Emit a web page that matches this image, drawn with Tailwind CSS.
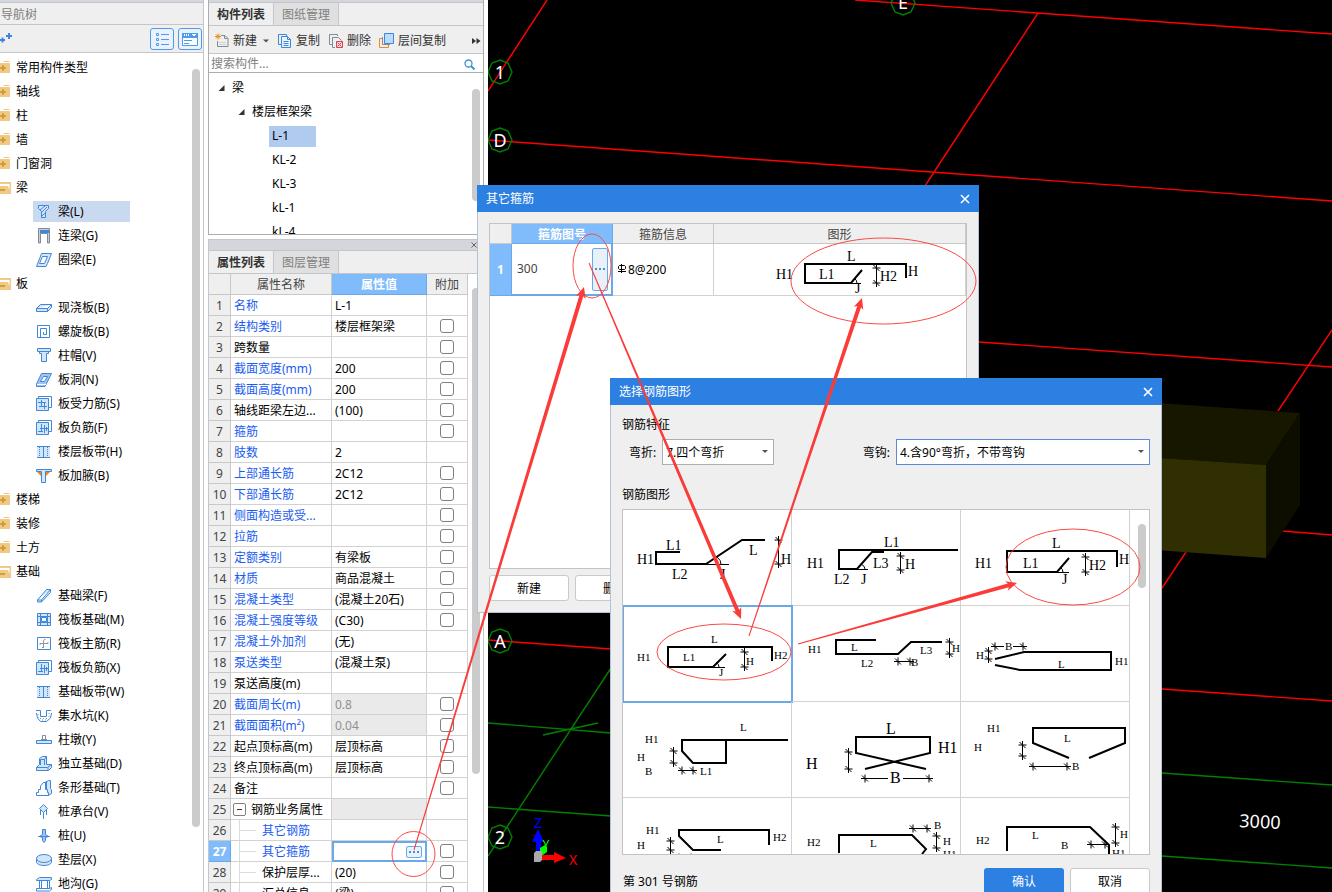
<!DOCTYPE html>
<html lang="zh-CN">
<head>
    <meta charset="UTF-8">
    <meta name="viewport" content="width=device-width, initial-scale=1.0">
    <title>其它箍筋</title>
    <script src="https://cdn.jsdelivr.net/npm/@tailwindcss/browser@4"></script>
</head>
<body class="bg-white text-black text-xs font-['Noto_Sans','Noto_Sans_CJK_SC',sans-serif]">
<div class="relative flex h-screen w-full overflow-hidden">

    <!-- Navigation tree -->
    <aside class="relative flex w-[204px] shrink-0 flex-col border-r border-[#c3c6cc]">
        <div class="h-[3px] border-b border-[#c3c6cc] bg-[#d5d6db]"></div>
        <h2 class="h-[22px] border-b border-[#c3c6cc] bg-[#efefef] pl-px leading-[23px] text-[#808080]">导航树</h2>
        <div class="flex h-7 items-center gap-1 border-b border-[#c3c6cc] bg-[#efefef] pt-[2px] pr-px">
            <svg class="mr-auto h-4 w-4" viewBox="0 0 16 16" stroke="#3f87d8" stroke-width="2"><path d="M0 9h5M2.500 6.500v5M6 5h6M9 2v6"/></svg>
            <button aria-label="列表" class="flex h-[22px] w-6 items-center justify-center rounded-[3px] border border-[#4d9bea] bg-[#eaf3fd]">
                <svg class="h-4 w-4" viewBox="0 0 16 16" fill="none" stroke="#4d9bea"><path d="M2.500 2.500h2v2h-2zM2.500 7.500h2v2h-2zM2.500 12.500h2v2h-2zM7 3.500h8M7 8.500h8M7 13.500h8"/></svg>
            </button>
            <button aria-label="面板" class="flex h-[22px] w-6 items-center justify-center rounded-[3px] border border-[#4d9bea] bg-[#eaf3fd]">
                <svg class="h-4 w-4" viewBox="0 0 16 16" fill="none" stroke="#4d9bea"><path fill="#fff" d="M.5 2.500h15v12H.5z"/><path fill="#4d9bea" d="M.5 2.500h15v4H.5z"/><path stroke="#fff" d="M2.500 3v2M4.500 3v2M6.500 3v2M10 3.500h4M11 4.500h2"/><path d="M2 9.500h8M2 12.500h5"/></svg>
            </button>
        </div>
        <ul id="navTree" class="overflow-hidden pt-[3px]"></ul>
        <div class="absolute top-[69px] right-[3px] h-[758px] w-2 rounded-full bg-[#cbcbcb]"></div>
    </aside>

    <!-- Component list + properties -->
    <section class="mx-1 flex w-[276px] shrink-0 flex-col">
        <div class="relative flex h-[235px] shrink-0 flex-col border border-t-0 border-[#adadad]">
            <div class="h-[3px] shrink-0 border-b border-[#c3c6cc] bg-[#d5d6db]"></div>
            <div class="flex h-[23px] shrink-0 border-b border-[#c3c6cc] bg-[#efefef]">
                <button class="w-[65px] border-r border-[#c3c6cc] pt-[2px] font-bold text-[#333]">构件列表</button>
                <button class="w-[65px] border-r border-[#c3c6cc] bg-[#e0e0e0] pt-[2px] text-[#808080]">图纸管理</button>
            </div>
            <div class="flex h-7 shrink-0 items-center gap-1 border-b border-[#c3c6cc] bg-[#efefef] pt-[2px] pr-[2px] pl-[6px] text-[#333]">
                <button class="flex items-center gap-1">
                    <svg class="h-4 w-[14px]" viewBox="0 0 14 16" fill="none"><path stroke="#808b95" d="M6 2.500h4l3 3v8H2.500V8M9.500 2.500v3h3"/><path stroke="#d0d4d8" d="M4 9.500h7M4 11.500h7"/><path stroke="#f08a1d" d="M0 3.500h6M3 .5v6M1 1.500l4 4M5 1.500l-4 4"/></svg>
                    新建
                </button>
                <svg class="mx-px h-2 w-2" viewBox="0 0 8 8"><path fill="#555" d="M1 2.500h6L4 5.500z"/></svg>
                <button class="ml-[3px] flex items-center gap-1">
                    <svg class="h-4 w-[14px]" viewBox="0 0 14 16" fill="none" stroke="#3f87d8"><path d="M8.500 3V1.500h-8v10H3"/><path fill="#eaf3fd" d="M3.500 3.500h6l3 3v8h-9zM9.500 3.500v3h3M5.500 8.500h5M5.500 10.500h5M5.500 12.500h5"/></svg>
                    复制
                </button>
                <button class="ml-1 flex items-center gap-1">
                    <svg class="h-4 w-[15px]" viewBox="0 0 15 16" fill="none"><path stroke="#7f8b97" d="M9.500 3V1.500h-8v10H4M7 14.500H4.500v-10h6l3 3"/><path fill="#fbdede" stroke="#d9434e" d="M8.500 8.500h6v6h-6zM9.500 9.500l4 4M13.500 9.500l-4 4"/></svg>
                    删除
                </button>
                <button class="ml-1 flex items-center gap-1">
                    <svg class="h-4 w-[15px]" viewBox="0 0 15 16" fill="none"><path stroke="#7f8b97" d="M3.500 4v7.500H11"/><path stroke="#f08a1d" d="M3 5.500H.5v9h9V12"/><path fill="#bcdcff" stroke="#3f87d8" d="M5.500 .5h9v10h-9z"/></svg>
                    层间复制
                </button>
                <svg class="ml-auto h-2 w-[9px]" viewBox="0 0 9 8" fill="#333"><path d="M0 1l4 3-4 3zM4.500 1l4 3-4 3z"/></svg>
            </div>
            <div class="flex h-[19px] shrink-0 items-center border-b border-[#adadad] pt-[2px] pr-2">
                <input aria-label="搜索构件" placeholder="搜索构件..." class="min-w-0 flex-1 pl-[2px] outline-none placeholder:text-[#808080]">
                <svg class="h-[11px] w-[11px]" viewBox="0 0 11 11" fill="none" stroke="#3b93cf"><circle cx="4.500" cy="4.500" r="3.500" stroke-width="1.300"/><path d="M7 7l3.500 3.500" stroke-width="2"/></svg>
            </div>
            <ul class="min-h-0 flex-1 overflow-hidden pt-[3px] leading-6">
                <li class="flex items-center gap-[6px] pl-2"><svg class="h-2 w-[9px]" viewBox="0 0 9 8"><path fill="#333" d="M7.500 1v6h-6z"/></svg>梁</li>
                <li class="flex items-center gap-[6px] pl-7"><svg class="h-2 w-[9px]" viewBox="0 0 9 8"><path fill="#333" d="M7.500 1v6h-6z"/></svg>楼层框架梁</li>
                <li class="flex h-6 items-center pl-[60px]"><span class="h-[21px] w-[47px] bg-[#b0cbed] pl-[3px] leading-5">L-1</span></li>
                <li class="pl-[63px]">KL-2</li>
                <li class="pl-[63px]">KL-3</li>
                <li class="pl-[63px]">kL-1</li>
                <li class="pl-[63px]">kL-4</li>
            </ul>
            <div class="absolute top-[89px] right-[3px] h-28 w-2 rounded-full bg-[#cbcbcb]"></div>
        </div>

        <div class="relative mt-1 flex min-h-0 flex-1 flex-col border-x border-[#c3c6cc]">
            <div class="flex h-3 shrink-0 items-center justify-end border-y border-[#c3c6cc] bg-[#d5d6db] pr-[6px]">
                <svg class="h-[6px] w-[6px]" viewBox="0 0 6 6" stroke="#666"><path d="M.5 .5l5 5M5.500 .5l-5 5"/></svg>
            </div>
            <div class="flex h-[23px] shrink-0 border-b border-[#c3c6cc] bg-[#efefef]">
                <button class="w-[65px] border-r border-[#c3c6cc] pt-[2px] font-bold text-[#333]">属性列表</button>
                <button class="w-[65px] border-r border-[#c3c6cc] bg-[#e0e0e0] pt-[2px] text-[#808080]">图层管理</button>
            </div>
            <div class="min-h-0 flex-1 overflow-hidden">
                <table class="w-[259px] table-fixed border-separate border-spacing-0">
                    <thead>
                        <tr class="h-[21px] bg-[#efefef] text-[#444]">
                            <th class="w-[22px] border-r border-b border-[#c8c8c8] p-0"></th>
                            <th class="w-[101px] border-r border-b border-[#c8c8c8] p-0 pt-[2px] font-normal">属性名称</th>
                            <th class="w-[95px] border-r border-b border-[#6aa9e9] bg-[#80bcfb] p-0 pt-[2px] font-bold text-white">属性值</th>
                            <th class="w-[41px] border-r border-b border-[#c8c8c8] p-0 pt-[2px] font-normal">附加</th>
                        </tr>
                    </thead>
                    <tbody id="props"></tbody>
                </table>
            </div>
            <div class="absolute top-[49px] right-[3px] h-[486px] w-2 rounded-full bg-[#cbcbcb]"></div>
        </div>
    </section>

    <!-- 3D view -->
    <main class="min-w-0 flex-1 bg-black">
        <svg class="h-full w-full" viewBox="488 0 844 892" preserveAspectRatio="xMinYMin slice" fill="none">
            <g stroke="#ff0000" stroke-width="1.400">
                <path d="M547 0L488 91M855 0L1332 34M1038 13L925 186M488 140L1332 201M979 342L1332 367M1332 330L1278 411M1282 531L1332 535M1186 552L1162 588M1162 689L1332 701M488 640L611 649"/>
            </g>
            <path fill="#171700" d="M1100 399L1300 413 1266 465 1100 454z"/>
            <path fill="#2f2f02" d="M1100 454L1266 465V558L1100 546z"/>
            <path fill="#0d0d00" d="M1266 465L1300 413V505L1266 558z"/>
            <g stroke="#008000" stroke-width="1.400">
                <path d="M488 723L611 733M488 807L611 816M488 856L611 668M543 735L598 723M1162 773L1332 785M1162 856L1332 868"/>
                <path id="bubbles"/>
            </g>
            <g fill="#fff" font-size="18" text-anchor="middle">
                <text x="903" y="9">E</text>
                <text x="500" y="79">1</text>
                <text x="500" y="147">D</text>
                <text x="500" y="648">A</text>
                <text x="500" y="844">2</text>
                <text x="1260" y="828" transform="rotate(3 1260 821)">3000</text>
            </g>
            <path fill="#00f" d="M536 840h5v13h-5zM532 842l6-13 6 13z"/>
            <path fill="#0f0" d="M540 848l5-3 2 2v5l-4 3-3 1z"/>
            <path fill="#f00" d="M542 855h13v5h-13zM554 852l12 6-12 5z"/>
            <path fill="#aaa" d="M534 853l2-2h6v9l-2 2h-6z"/>
            <g font-size="14" text-anchor="middle">
                <text x="538" y="828" fill="#00f">Z</text>
                <text x="546" y="849" fill="#0f0" font-size="12">Y</text>
                <text x="573" y="865" fill="#f00">X</text>
            </g>
        </svg>
    </main>

    <!-- Other stirrups window -->
    <div class="absolute top-[185px] left-[477px] flex h-[428px] w-[502px] flex-col border border-t-0 border-[#b5c1d6] bg-[#efefef]">
        <div class="-mx-px flex h-[27px] items-center justify-between bg-[#2c80e2] px-[9px] text-white">
            <span>其它箍筋</span>
            <button aria-label="关闭"><svg class="h-[10px] w-[10px]" viewBox="0 0 10 10" stroke="#fff" stroke-width="1.600"><path d="M1 1l8 8M9 1l-8 8"/></svg></button>
        </div>
        <div class="mx-[11px] mt-[11px] h-[346px] border border-[#c3c3c3] bg-white">
            <table class="w-[476px] table-fixed border-separate border-spacing-0">
                <thead>
                    <tr class="h-5 bg-[#efefef] text-[#444]">
                        <th class="w-[22px] border-r border-b border-[#c8c8c8] p-0"></th>
                        <th class="w-[101px] border-r border-b border-[#6aa9e9] bg-[#80bcfb] p-0 pt-[2px] font-bold text-white">箍筋图号</th>
                        <th class="w-[101px] border-r border-b border-[#c8c8c8] p-0 pt-[2px] font-normal">箍筋信息</th>
                        <th class="w-[252px] border-r border-b border-[#c8c8c8] p-0 pt-[2px] font-normal">图形</th>
                    </tr>
                </thead>
                <tbody>
                    <tr class="h-[52px]">
                        <th class="border-r border-b border-[#6aa9e9] bg-[#80bcfb] p-0 font-bold text-white">1</th>
                        <td class="border-r-2 border-b-2 border-[#6aa9e9] p-0">
                            <div class="flex items-center justify-between pr-[3px] pl-[5px] text-[#444]">
                                300
                                <button aria-label="选择图号" class="flex h-[43px] w-4 items-center justify-center gap-[2px] rounded-[2px] border border-[#6aa9e9] bg-[#eaf0f7]">
                                    <i class="h-[2px] w-[2px] bg-[#4a8fd6]"></i><i class="h-[2px] w-[2px] bg-[#4a8fd6]"></i><i class="h-[2px] w-[2px] bg-[#4a8fd6]"></i>
                                </button>
                            </div>
                        </td>
                        <td class="border-r border-b border-[#d2d2d2] p-0">
                            <div class="flex items-center gap-px pl-1">
                                <svg class="h-[11px] w-[10px]" viewBox="0 0 10 11" fill="none" stroke="#000"><path d="M2.500 1.500h5l1 1v2l-1 1h-5l-1-1v-2zM4.500 0v9M1 7.500h8"/></svg>
                                8@200
                            </div>
                        </td>
                        <td class="border-r border-b border-[#d2d2d2] p-0"><svg id="rowShape" class="block h-[51px] w-full" viewBox="714 244 251 51"></svg></td>
                    </tr>
                </tbody>
            </table>
        </div>
        <div class="mx-[11px] mt-[6px] flex gap-[6px]">
            <button class="h-[26px] w-20 rounded-[3px] border border-[#cacaca] bg-white pt-[2px]">新建</button>
            <button class="h-[26px] w-20 rounded-[3px] border border-[#cacaca] bg-white pt-[2px]">删除</button>
        </div>
    </div>

    <!-- Shape picker window -->
    <div class="absolute top-[378px] left-[610px] w-[552px] border border-t-0 border-[#b5c1d6] bg-[#efefef] pb-3">
        <div class="-mx-px flex h-[27px] items-center justify-between bg-[#2c80e2] px-[9px] text-white">
            <span>选择钢筋图形</span>
            <button aria-label="关闭"><svg class="h-[10px] w-[10px]" viewBox="0 0 10 10" stroke="#fff" stroke-width="1.600"><path d="M1 1l8 8M9 1l-8 8"/></svg></button>
        </div>
        <div class="px-[11px]">
            <h3 class="mt-3 leading-4">钢筋特征</h3>
            <div class="mt-[6px] flex items-center justify-between pl-[7px]">
                <div class="relative flex items-center gap-[6px]">
                    <label for="bend" class="pt-[2px]">弯折:</label>
                    <select id="bend" class="h-[26px] w-28 appearance-none border border-[#adadad] bg-white pt-[2px] pl-[3px] outline-none"><option>7.四个弯折</option></select>
                    <svg class="pointer-events-none absolute right-[6px] h-1 w-[6px]" viewBox="0 0 6 4"><path fill="#555" d="M0 0h6L3 3z"/></svg>
                </div>
                <div class="relative flex items-center gap-[6px]">
                    <label for="hook" class="pt-[2px]">弯钩:</label>
                    <select id="hook" class="h-[26px] w-[254px] appearance-none border border-[#5b8bd8] bg-white pt-[2px] pl-[3px] outline-none"><option>4.含90°弯折，不带弯钩</option></select>
                    <svg class="pointer-events-none absolute right-[6px] h-1 w-[6px]" viewBox="0 0 6 4"><path fill="#555" d="M0 0h6L3 3z"/></svg>
                </div>
            </div>
            <h3 class="mt-[22px] leading-4">钢筋图形</h3>
            <div class="relative mt-[6px] h-[346px] overflow-hidden border border-[#c3c3c3] bg-white">
                <div id="shapes" class="grid w-[507px] grid-cols-3"></div>
                <div class="absolute top-[14px] right-[3px] h-16 w-2 rounded-full bg-[#cbcbcb]"></div>
            </div>
            <div class="mt-[13px] flex items-center gap-[6px]">
                <span class="mr-auto pl-px">第 301 号钢筋</span>
                <button class="h-7 w-20 rounded-[3px] bg-[#2c80e2] text-white">确认</button>
                <button class="h-7 w-20 rounded-[3px] border border-[#cacaca] bg-white">取消</button>
            </div>
        </div>
    </div>

    <!-- Callouts -->
    <svg class="pointer-events-none absolute inset-0 h-full w-full" fill="none" stroke="#fb4a48">
        <ellipse cx="413.500" cy="854" rx="21.500" ry="22.500"/>
        <ellipse cx="592" cy="266" rx="19" ry="32"/>
        <ellipse cx="883.500" cy="281" rx="92.500" ry="43"/>
        <ellipse cx="1073" cy="567" rx="67" ry="38"/>
        <ellipse cx="724" cy="652" rx="67" ry="28"/>
        <path id="arrows" fill="#fb3b38" stroke="none"/>
    </svg>
</div>

<script>
// ---- navigation tree ----
const B = 'stroke="#3f87d8"', L = 'fill="#d3e5f8"';
const icons = {
    beam: `<path ${B} ${L} d="M2.500 1.500h10v3l-3 3v6h-4v-6l-3-3z"/><path ${B} d="M4 6l5-4M6 8l5-5M6 12l3-3"/>`,
    link: `<path stroke="#7f8b97" fill="#c9ced3" d="M2.500 15V.5h11V15h-2V5.500h-7V15z"/><path fill="#3f87d8" d="M4 2h9v3H4z"/>`,
    ring: `<path ${B} ${L} d="M5.500 1.500h10l-4 10-1.500 3H.5l3.500-9z"/><path ${B} fill="#fff" d="M6.500 4.500h5l-3 7h-5z"/>`,
    slab: `<path ${B} ${L} d="M.5 8.500l4-4h11v3l-4 4H.5zM.5 8.500h11l4-4M11.500 8.500v3"/>`,
    spiral: `<path ${B} d="M1.500 1.500h12v12h-12zM7.500 8v2.500h3v-6h-6v9"/>`,
    cap: `<path ${B} ${L} d="M1.500 .5h13v3h-2v2h-2v8h-5v-8h-2v-2h-2z"/><path ${B} d="M3 3.500h10"/>`,
    hole: `<path ${B} fill="#9fc5ee" d="M5.500 1.500h10l-5 10-1.500 3H.5V12z"/><path ${B} fill="#fff" d="M7.500 4.500h4l-3 5h-4z"/><path stroke="#fff" d="M1 12.500h9"/>`,
    rebarS: `<path ${B} d="M2.500 3V.5h13v11H13"/><path ${B} ${L} d="M.5 2.500h12v12H.5z"/><path ${B} d="M2 6.500h8M3 10.500h8M5.500 4v7M8.500 6v7"/>`,
    rebarF: `<path ${B} d="M2.500 3V.5h13v11H13"/><path ${B} ${L} d="M.5 2.500h12v12H.5z"/><path ${B} d="M5.500 4v8M2 11.500h5M8.500 5v8M4 8.500h8M10.500 7v4"/>`,
    strip: `<path ${L} d="M1 3h13v11H1z"/><path ${B} d="M1 2.500h13M1 13.500h13M7.500 2v12"/><path ${B} stroke-dasharray="1 1" d="M3.500 3v10M11.500 3v10"/>`,
    haunch: `<path fill="#f58220" d="M1 4h13l-4 4v2H5V8z"/><path ${B} ${L} d="M.5 1.500h15v2h-6v11h-4v-11h-5z"/>`,
    fbeam: `<path ${B} ${L} d="M1.500 12l9-10.500h4v3l-9 9.500h-4zM1.500 12h4l9-10.500M5.500 12v2"/>`,
    raft: `<path ${B} ${L} d="M1.500 1.500h13v12h-13z"/><path ${B} d="M4.500 1v13M11.500 1v13M1 4.500h14M1 10.500h14"/><path ${B} fill="#fff" d="M5.500 5.500h5v4h-5z"/>`,
    rmain: `<path ${B} d="M1.500 1.500h13v12h-13z"/><path stroke="#8b96a0" d="M7.500 12V4.500q0-1 2-1M4 9V7.500h8V6M7.500 11.500H6"/>`,
    pit: `<path ${B} d="M0 2.500h4.500v6h6v-6H15M.5 5l1 5 3 3.500h6l4-3.500 1-5"/><path stroke="#8b96a0" stroke-dasharray="1 2" d="M2 6v4M4 10.500h8M13 5v4M6 12h5"/>`,
    pier: `<path stroke="#7f8b97" d="M6.500 3.500h3v4h-3zM5 7.500h6"/><path ${B} ${L} d="M.5 8.500h15v3H.5z"/>`,
    found: `<path ${B} ${L} d="M.5 11.500l3-3v-6l3-2h4v8h5v3l-3 3H.5z"/><path ${B} d="M4.500 9V3.500h4V9M8.500 3.500l2-3M.5 11.500h11l4-3M12 11.500v3"/>`,
    fstrip: `<path ${B} ${L} d="M9 2.500l3.500-2h2v8l1 1v4l-3 2-2-6V2z"/><path ${B} fill="#fff" d="M.5 15.500v-3h2v-3h2V6l3-3.500h2v7h2v3h1v3z"/>`,
    pcap: `<path ${B} ${L} d="M7.500 .5l4 4-4 4-4-4z"/><path ${B} d="M7.500 8v7M4.500 6v5M10.500 6v5"/>`,
    pile: `<path ${B} fill="#9fc5ee" d="M6.500 1.500h3v5l3 2-3 1v3l-1.500 2-1.500-2v-3l-3-1 3-2z"/><path ${B} d="M2 8.500h12"/>`,
    pad: `<path ${B} ${L} d="M.5 6.500v4c2 4 13 4 15 0v-4"/><ellipse cx="8" cy="6.500" rx="7.500" ry="4" ${B} ${L}/>`,
    ditch: `<path ${B} ${L} d="M.5 3.500l3-2h12v2l-2 1h-13z"/><path ${B} d="M3.500 4.500v8M5.500 4.500v8M11.500 4.500v8M13.500 4.500v8M.5 12.500h13l2-1v2l-2 1.500H.5z"/>`,
};

// [label, icon]; folders use "+" (closed) or "-" (open)
const nav = [
    ['常用构件类型', '+'], ['轴线', '+'], ['柱', '+'], ['墙', '+'], ['门窗洞', '+'],
    ['梁', '-'], ['梁(L)', 'beam'], ['连梁(G)', 'link'], ['圈梁(E)', 'ring'],
    ['板', '-'], ['现浇板(B)', 'slab'], ['螺旋板(B)', 'spiral'], ['柱帽(V)', 'cap'], ['板洞(N)', 'hole'],
    ['板受力筋(S)', 'rebarS'], ['板负筋(F)', 'rebarF'], ['楼层板带(H)', 'strip'], ['板加腋(B)', 'haunch'],
    ['楼梯', '+'], ['装修', '+'], ['土方', '+'],
    ['基础', '-'], ['基础梁(F)', 'fbeam'], ['筏板基础(M)', 'raft'], ['筏板主筋(R)', 'rmain'], ['筏板负筋(X)', 'rebarF'],
    ['基础板带(W)', 'strip'], ['集水坑(K)', 'pit'], ['柱墩(Y)', 'pier'], ['独立基础(D)', 'found'], ['条形基础(T)', 'fstrip'],
    ['桩承台(V)', 'pcap'], ['桩(U)', 'pile'], ['垫层(X)', 'pad'], ['地沟(G)', 'ditch'],
];
const folder = {
    '+': '<path fill="#f0ca85" d="M4 1h5l1 1H3zM0 3h10v10H0z"/><path stroke="#c8922d" stroke-width="1.500" d="M0 8h6M3 5v6"/>',
    '-': '<path fill="#f0ca85" d="M0 2h11v12H0z"/><path fill="#fff" d="M0 4h9.500v6L8 6H0z"/><path stroke="#c8922d" stroke-width="1.500" d="M0 10h5"/>',
};
document.getElementById('navTree').innerHTML = nav.map(([label, icon]) => {
    if (folder[icon]) {
        return `<li class="flex h-6 items-center gap-1"><svg class="h-4 w-3" viewBox="0 0 12 16" fill="none">${folder[icon]}</svg>${label}</li>`;
    }
    const cls = icon === 'beam' ? 'w-[97px] bg-[#c9d9f0]' : '';
    return `<li class="flex h-6 items-center pl-[33px]"><a href="#" class="flex h-[21px] items-center gap-[6px] pl-[3px] ${cls}"><svg class="h-4 w-4" viewBox="0 0 16 16" fill="none">${icons[icon]}</svg>${label}</a></li>`;
}).join('');

// ---- property table: [name, value, blue name, has checkbox] ----
const props = [
    ['名称', 'L-1', 1, 0], ['结构类别', '楼层框架梁', 1, 1], ['跨数量', '', 0, 1], ['截面宽度(mm)', '200', 1, 1],
    ['截面高度(mm)', '200', 1, 1], ['轴线距梁左边...', '(100)', 0, 1], ['箍筋', '', 1, 1], ['肢数', '2', 1, 0],
    ['上部通长筋', '2C12', 1, 1], ['下部通长筋', '2C12', 1, 1], ['侧面构造或受...', '', 1, 1], ['拉筋', '', 1, 1],
    ['定额类别', '有梁板', 1, 1], ['材质', '商品混凝土', 1, 1], ['混凝土类型', '(混凝土20石)', 1, 1], ['混凝土强度等级', '(C30)', 1, 1],
    ['混凝土外加剂', '(无)', 1, 0], ['泵送类型', '(混凝土泵)', 1, 0], ['泵送高度(m)', '', 0, 0], ['截面周长(m)', '0.8', 1, 1],
    ['截面面积(m²)', '0.04', 1, 1], ['起点顶标高(m)', '层顶标高', 0, 1], ['终点顶标高(m)', '层顶标高', 0, 1], ['备注', '', 0, 1],
    ['钢筋业务属性', '', 0, 0], ['其它钢筋', '', 1, 0], ['其它箍筋', '', 1, 1], ['保护层厚...', '(20)', 0, 1], ['汇总信息', '(梁)', 0, 1],
];
const dot = '<i class="h-[2px] w-[2px] bg-[#4a8fd6]"></i>';
document.getElementById('props').innerHTML = props.map(([name, value, blue, check], i) => {
    const n = i + 1;
    const num = n === 27 ? 'border-[#6aa9e9] bg-[#80bcfb] font-bold text-white' : 'border-[#c8c8c8] bg-[#efefef] font-normal text-[#444]';
    let label = `<span class="pt-[2px]">${name}</span>`;
    if (n === 25) label = `<span class="mr-[5px] -ml-px flex h-[13px] w-[13px] items-center justify-center rounded-[2px] border border-[#808080]"><i class="h-px w-[5px] bg-[#333]"></i></span>${label}`;
    if (n > 25) label = `<span class="ml-[5px] mr-[6px] flex h-[21px] w-[17px] items-center border-l border-[#dcdcdc]"><i class="h-px w-full bg-[#dcdcdc]"></i></span>${label}`;
    let cell = 'border-r border-b border-[#d2d2d2] pt-[2px] pl-[3px]';
    if (n === 20 || n === 21 || n === 25) cell = 'border-r border-b border-[#d2d2d2] bg-[#eaeaea] pt-[2px] pl-[3px] text-[#909090]';
    let val = value;
    if (n === 27) {
        cell = 'border-2 border-[#6aa9e9] pt-0 pl-0';
        val = `<button aria-label="编辑其它箍筋" class="mr-[3px] ml-auto flex h-3 w-4 items-center justify-center gap-[2px] rounded-[2px] border border-[#6aa9e9] bg-[#eaf3fd]">${dot}${dot}${dot}</button>`;
    }
    const box = check ? `<input type="checkbox" aria-label="${name}" class="mx-auto block h-[14px] w-[14px] appearance-none rounded-[3px] border border-[#808080] bg-white">` : '';
    return `<tr class="h-[21px]">
        <th class="border-r border-b px-0 pt-[2px] pb-0 ${num}">${n}</th>
        <td class="border-r border-b border-[#d2d2d2] p-0 ${blue ? 'text-[#1a5cf0]' : ''}"><div class="flex h-5 items-center overflow-hidden pl-[3px] whitespace-nowrap">${label}</div></td>
        <td class="pr-0 pb-0 ${cell}"><div class="flex items-center whitespace-nowrap">${val}</div></td>
        <td class="border-r border-b border-[#d2d2d2] p-0">${box}</td>
    </tr>`;
}).join('');

// ---- rebar shapes ----
// dimension lines with slashed ends
const tick = (x, y) => `M${x - 4} ${y}h8M${x} ${y - 4}v8M${x - 3} ${y - 3}l6 6`;
const v = (x, y1, y2) => `M${x} ${y1}V${y2}` + tick(x, y1) + tick(x, y2);
const h = (x1, x2, y) => `M${x1} ${y}H${x2}` + tick(x1, y) + tick(x2, y);

function draw(s) {
    return `<path d="${s.bar}" fill="none" stroke="#000" stroke-width="2"/>
        <path d="${s.dim}" fill="none" stroke="#000"/>
        <g font-family="Liberation Serif, serif" font-size="${s.size}">${s.text.map(([t, x, y]) => `<text x="${x}" y="${y}">${t}</text>`).join('')}</g>`;
}

const shapes = [
    { size: 14, bar: 'M680 552H656V564H706L742 540H765', dim: v(778.5, 540, 564) + 'M706 564.500H729M717 557q4 3 4 7',
      text: [['L1', 666, 550], ['H1', 637, 564], ['L2', 672, 579], ['L', 749, 555], ['J', 720, 579], ['H', 781, 564]] },
    { size: 14, bar: 'M958 550H839V569H857L872 552H884', dim: v(900.5, 556, 570) + 'M857 569.500H868M861 564q4 2 4 5',
      text: [['H1', 807, 568], ['L1', 884, 547], ['L3', 873, 568], ['H', 905, 569], ['L2', 834, 584], ['J', 861, 584]] },
    { size: 14, bar: 'M1117 567V551H1007V572H1057L1069 558', dim: v(1085.5, 557, 572) + 'M1057 572.500H1069M1060 567q3 2 3 5',
      text: [['H1', 975, 568], ['L', 1052, 548], ['L1', 1023, 568], ['H2', 1089, 570], ['H', 1119, 564], ['J', 1062, 584]] },
    { size: 11, bar: 'M772 661V647H668V667H713L726 654', dim: v(744.5, 652, 667) + 'M713 667.500H725M716 662q3 2 3 5',
      text: [['H1', 637, 661], ['L', 711, 643], ['L1', 683, 661], ['J', 719, 676], ['H', 746, 665], ['H2', 774, 659]] },
    { size: 11, bar: 'M876 640H836V654H898L911 642H942', dim: v(949.5, 642, 654) + h(898, 910, 661.5),
      text: [['H1', 808, 653], ['L', 851, 651], ['L2', 861, 667], ['L3', 920, 654], ['H', 952, 652], ['B', 911, 666]] },
    { size: 11, bar: 'M995 659L1024 652H1111V670H1020L995 665', dim: v(988.5, 651, 659) + tick(995, 646.5) + tick(1023, 646.5) + 'M995 646.500h9M1013 646.500h10',
      text: [['H', 976, 659], ['B', 1005, 650], ['L', 1058, 668], ['H1', 1115, 665]] },
    { size: 11, bar: 'M788 740H682V751L693 763H726V740', dim: v(673.5, 751, 763) + h(682, 693, 770.5),
      text: [['H1', 645, 743], ['H', 637, 761], ['B', 645, 775], ['L', 740, 731], ['L1', 700, 775]] },
    { size: 16, bar: 'M926 769L856 753V737H930V753L865 769', dim: v(848.5, 752, 769) + tick(865, 778.5) + tick(929, 778.5) + 'M865 778.500h23M903 778.500h26',
      text: [['H', 806, 769], ['L', 886, 734], ['H1', 938, 753], ['B', 890, 783]] },
    { size: 11, bar: 'M1069 758L1033 743V728H1125V743L1089 758', dim: v(1022.5, 745, 756) + h(1033, 1067, 766.5),
      text: [['H1', 987, 732], ['H', 974, 751], ['L', 1064, 742], ['B', 1072, 770]] },
    { size: 11, bar: 'M721 850H693L679 836V830H769V845', dim: v(670.5, 841, 850) + h(679, 691, 857.5),
      text: [['H1', 646, 834], ['H', 637, 849], ['L', 717, 843], ['H2', 773, 841]] },
    { size: 11, bar: 'M839 853V835H912L926 849L922 854', dim: v(936.5, 836, 848) + h(913, 927, 828.5),
      text: [['H2', 807, 846], ['L', 870, 847], ['B', 934, 829], ['H', 943, 845], ['H1', 943, 858]] },
    { size: 11, bar: 'M1007 851V827H1090L1109 845V856', dim: v(1115.5, 827, 843) + h(1091, 1105, 844.5),
      text: [['H2', 976, 844], ['L', 1032, 839], ['B', 1061, 849], ['H', 1120, 838], ['H1', 1112, 857]] },
];
document.getElementById('shapes').innerHTML = shapes.map((s, i) => {
    const x = 623 + (i % 3) * 169, y = 510 + Math.floor(i / 3) * 96;
    const cls = i === 3 ? 'outline-2 -outline-offset-1 outline-[#6aa9e9]' : '';
    return `<button aria-label="图形 ${298 + i}" class="h-24 border-r border-b border-[#d2d2d2] ${cls}"><svg class="block h-full w-full" viewBox="${x} ${y} 168 95">${draw(s)}</svg></button>`;
}).join('');

document.getElementById('rowShape').innerHTML = draw({
    size: 14, bar: 'M906 278V264H805V283H851L862 270', dim: v(876.5, 268, 283) + 'M851 283.500H861M854 278q3 2 3 5',
    text: [['H1', 776, 279], ['L', 847, 261], ['L1', 819, 279], ['H2', 880, 281], ['H', 908, 276], ['J', 855, 293]],
});

// ---- axis bubbles (octagons) ----
document.getElementById('bubbles').setAttribute('d', [[903, 3], [500, 72], [500, 140], [500, 641], [500, 837]].map(([x, y]) =>
    `M${x} ${y - 12}l8 3 4 9-4 9-8 3-8-3-4-9 4-9z`).join(''));

// ---- callout arrows, widening toward the head ----
function arrow(x1, y1, x2, y2) {
    const len = Math.hypot(x2 - x1, y2 - y1), ux = (x2 - x1) / len, uy = (y2 - y1) / len;
    const p = (back, side) => `${x2 - ux * back - uy * side} ${y2 - uy * back + ux * side}`;
    return `M${p(len, 0.5)}L${p(9, 2)}L${p(11, 5)}L${p(0, 0)}L${p(11, -5)}L${p(9, -2)}L${p(len, -0.5)}z`;
}
document.getElementById('arrows').setAttribute('d',
    arrow(414, 850, 584, 287) + arrow(589, 263, 741, 619) + arrow(749, 636, 862, 298) + arrow(798, 644, 1017, 583));
</script>
</body>
</html>
